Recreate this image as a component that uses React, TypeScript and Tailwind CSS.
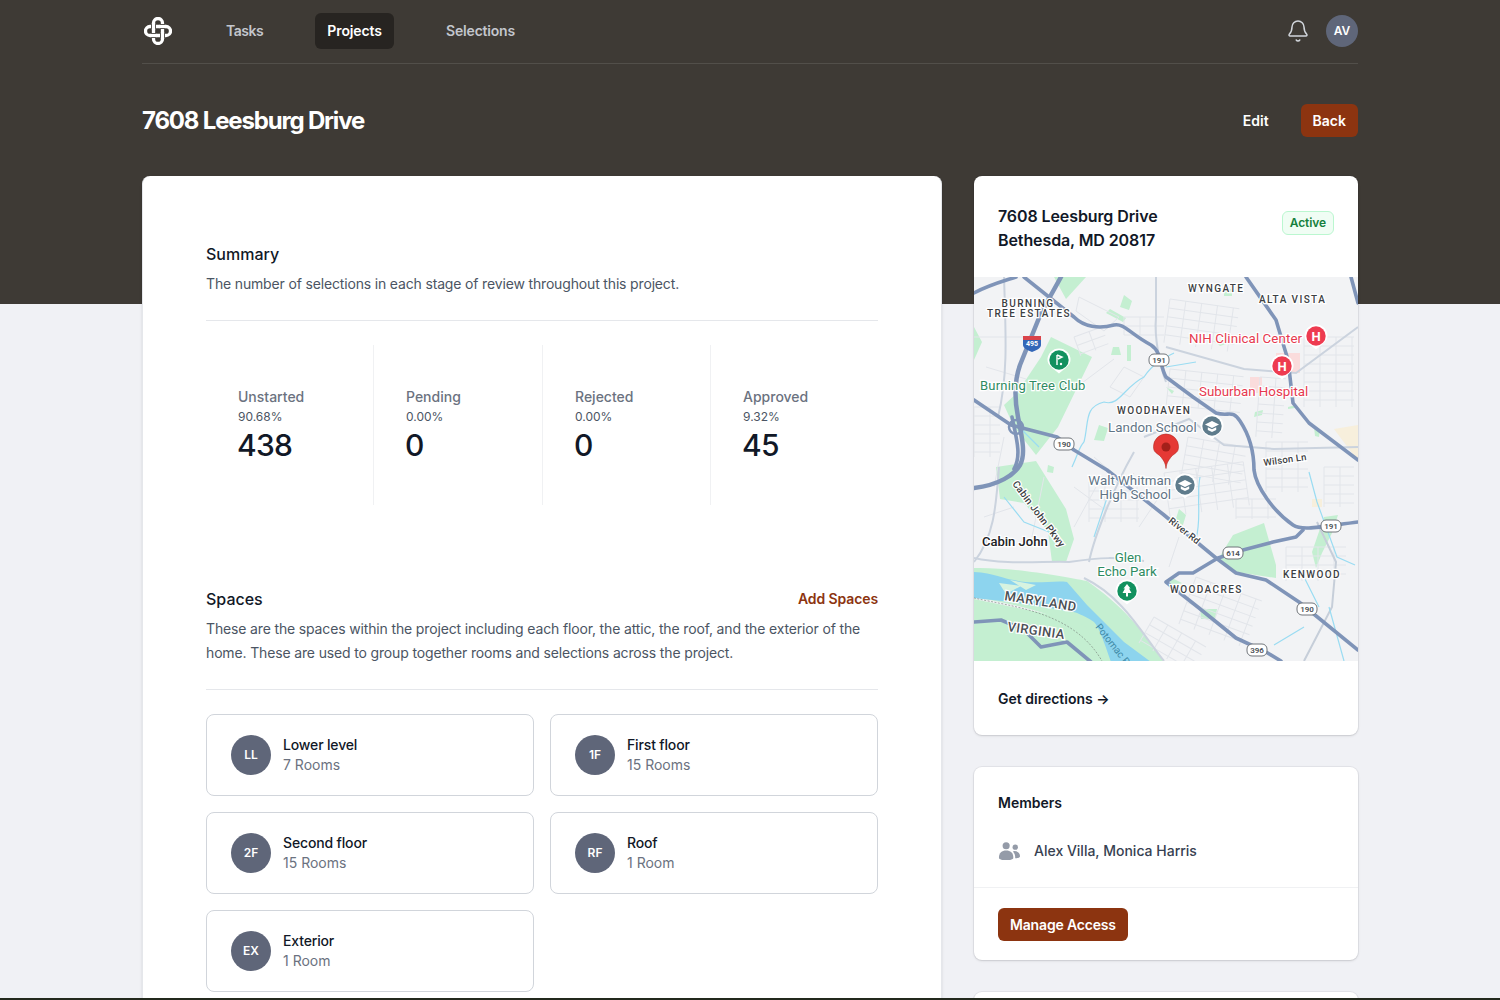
import { Bell } from "lucide-react"
import type { ReactNode } from "react"

const navItems = [
  { label: "Tasks", className: "rounded-md px-3 py-2 text-sm font-semibold tracking-[-0.5px] text-[#c3c6cd]" },
  { label: "Projects", className: "w-[79px] rounded-md bg-[#272421] py-2 text-center text-sm font-semibold tracking-[-0.1px] text-white" },
  { label: "Selections", className: "rounded-md px-3 py-2 text-sm font-semibold tracking-[-0.2px] text-[#c3c6cd]" },
]

const stats = [
  { label: "Unstarted", pct: "90.68%", count: "438" },
  { label: "Pending", pct: "0.00%", count: "0" },
  { label: "Rejected", pct: "0.00%", count: "0" },
  { label: "Approved", pct: "9.32%", count: "45" },
]

const spaces = [
  { initials: "LL", name: "Lower level", rooms: "7 Rooms" },
  { initials: "1F", name: "First floor", rooms: "15 Rooms" },
  { initials: "2F", name: "Second floor", rooms: "15 Rooms" },
  { initials: "RF", name: "Roof", rooms: "1 Room" },
  { initials: "EX", name: "Exterior", rooms: "1 Room" },
]

// residential street meshes on the map: x, y, w, h, angle
const streetBlocks = [
  [196, 22, 70, 44, 8],
  [196, 92, 74, 36, 6],
  [286, 100, 26, 60, 4],
  [330, 60, 50, 70, 0],
  [214, 160, 60, 40, 10],
  [190, 196, 80, 44, -8],
  [292, 165, 42, 50, 0],
  [262, 222, 40, 20, 0],
  [222, 300, 70, 50, 20],
  [312, 270, 60, 34, 0],
  [350, 190, 30, 40, 0],
  [100, 60, 30, 20, -20],
  [115, 205, 50, 40, 0],
  [150, 40, 40, 18, 0],
  [0, 130, 26, 50, 0],
  [180, 340, 60, 30, 30],
]

function Logo() {
  const bg = "#3e3a35"
  return (
    <svg width="28" height="28" viewBox="0 0 28 28" fill="none" stroke="#fff" strokeWidth="3.300">
      <path d="M9.500 10V6a4.500 4.500 0 0 1 9 0v16a4.500 4.500 0 0 1-9 0V10" />
      <path d="M6 9.500h16a4.500 4.500 0 0 1 0 9H6a4.500 4.500 0 0 1 0-9" />
      <path d="M9.500 6.800v5.400" stroke={bg} strokeWidth="5" />
      <path d="M9.500 6v7" />
      <path d="M15.800 9.500h5.400" stroke={bg} strokeWidth="5" />
      <path d="M15 9.500h7" />
      <path d="M18.500 15.800v5.400" stroke={bg} strokeWidth="5" />
      <path d="M18.500 15v7" />
      <path d="M6.800 18.500h5.400" stroke={bg} strokeWidth="5" />
      <path d="M6 18.500h7" />
    </svg>
  )
}

function Shield({ x, y, label }: { x: number; y: number; label: string }) {
  return (
    <g>
      <rect x={x - 10} y={y - 6} width="20" height="12" rx="5" fill="#fff" stroke="#70757a" strokeWidth="1" />
      <text x={x} y={y + 3} textAnchor="middle" fontSize="8" fontWeight="600" fill="#4a4f55">
        {label}
      </text>
    </g>
  )
}

function Pin({ x, y, color, children }: { x: number; y: number; color: string; children: ReactNode }) {
  return (
    <g transform={`translate(${x} ${y})`}>
      <path d="M-11.500 0a11.500 11.500 0 1 1 23 0c0 5-5 8-11.500 13.500c-6.500-5.500-11.500-8.500-11.500-13.500z" fill="#fff" />
      <circle r="9.700" fill={color} />
      {children}
    </g>
  )
}

function SchoolIcon() {
  return (
    <g fill="#fff">
      <path d="M-7-1.500L0-5L7-1.500L0 2Z" />
      <path d="M-4.200 1.200V4L0 6L4.200 4V1.200L0 3.200Z" />
    </g>
  )
}

function MapLabel({ x, y, children, fill = "#3c4043", size = 10, spacing = 1.4, anchor = "start", rotate, weight = 500 }: {
  x: number
  y: number
  children: string
  fill?: string
  size?: number
  spacing?: number
  anchor?: "start" | "middle" | "end"
  rotate?: number
  weight?: number
}) {
  return (
    <text
      x={x}
      y={y}
      fontSize={size}
      fill={fill}
      letterSpacing={spacing}
      textAnchor={anchor}
      fontWeight={weight}
      stroke="#fff"
      strokeWidth="2.500"
      paintOrder="stroke"
      transform={rotate ? `rotate(${rotate} ${x} ${y})` : undefined}
    >
      {children}
    </text>
  )
}

function StreetBlock({ x, y, w, h, angle }: { x: number; y: number; w: number; h: number; angle: number }) {
  const rows = Array.from({ length: Math.floor(h / 9) + 1 }, (_, i) => i * 9)
  const cols = Array.from({ length: Math.floor(w / 16) + 1 }, (_, i) => i * 16)
  return (
    <g transform={`rotate(${angle} ${x} ${y})`}>
      {rows.map((r) => (
        <path key={`r${r}`} d={`M${x} ${y + r}h${w}`} />
      ))}
      {cols.map((c) => (
        <path key={`c${c}`} d={`M${x + c} ${y}v${h}`} />
      ))}
    </g>
  )
}

function LocationMap() {
  return (
    <svg viewBox="0 0 384 384" width="384" height="384" className="block" style={{ fontFamily: "Roboto, sans-serif" }}>
      <rect width="384" height="384" fill="#f2f3f5" />

      {/* parks */}
      <g fill="#c4efd1">
        <path d="M77 60L118 80L84 150L62 178L40 150L30 128L43 116L67 80Z" />
        <path d="M80 0h32l-20 22Z" />
        <path d="M259 258L290 246L302 288L302 301L262 295L245 281Z" />
        <path d="M22 190L62 184L92 232L100 262L92 285L78 285L74 254L50 226L26 222Z" />
        <path d="M0 50l8 15l-8 18Z" />
        <path d="M0 291C40 290 90 300 113 304C150 330 165 350 190 384H120C110 345 80 335 0 320Z" />
        <path d="M0 322C60 335 100 340 112 350L128 384H0Z" />
        <path d="M150 18l8 6l-3 9l-9-3ZM136 32l16 9l-3 4l-17-9ZM139 70h6l2 8h-10ZM153 68h4v16h-4ZM125 148l9 3l-4 13l-10-1ZM74 188l6 2l-1 6l-6-1Z" />
        <path d="M250 12h8v7h-8ZM242 65l14-5l2 5l-12 4ZM281 135l8-2l-1 5l-8 2ZM314 130l8-2l-1 3l-7 1ZM340 150l6 2l-1 8l-4-1ZM192 110l8 4l-2 3ZM205 232l7 6l-4 13l-8-3ZM196 300l12 6l-4 2l-8-1ZM226 332h17l-2 10h-14ZM350 240l14-2l-6 18l-10 20l-6 15l-4-16Z" />
      </g>

      {/* hospital grounds */}
      <path d="M302 76h24v20h-24ZM276 100h12v16h-12Z" fill="#fadcdc" />
      <path d="M360 152l24-4v36ZM338 222h10v8h-10Z" fill="#f8edd6" opacity="0.8" />

      {/* minor streets */}
      <g fill="none" stroke="#e2e5ea" strokeWidth="1">
        {streetBlocks.map(([x, y, w, h, angle]) => (
          <StreetBlock key={`${x}-${y}`} x={x} y={y} w={w} h={h} angle={angle} />
        ))}
        <path d="M0 60h60M12 90l40 12M105 20l40 20l-15 14l-28-20ZM150 90l20 10l-14 20l-20-10ZM100 112l40-30" />
        <path d="M100 210l30 22l30-36M120 180l30 26M100 250l22-40M165 250l20-30M205 260l-10 30" />
        <path d="M10 240l30-10M30 160l-10 50M70 200l-12 60" />
      </g>

      {/* secondary roads */}
      <g fill="none" stroke="#cbd3de" strokeWidth="2">
        <path d="M30 0C32 60 34 100 24 140" />
        <path d="M182 0V40C180 60 186 90 192 105" />
        <path d="M170 160L215 142L250 168L300 172L384 170" />
        <path d="M192 70L270 92L322 96L384 50" />
        <path d="M25 190C22 230 20 260 0 285" />
        <path d="M0 281C30 288 70 284 95 285C130 280 140 280 170 284" />
        <path d="M110 301C150 320 170 360 190 384" />
        <path d="M160 175C140 210 120 260 115 285" />
        <path d="M343 245L362 285L358 330L330 384" stroke="#c6ced9" />
      </g>

      {/* water */}
      <path d="M0 295C20 296 30 302 40 303C60 308 80 303 93 305L113 328L150 365L177 385H137C130 365 125 350 120 345C110 338 100 335 100 335L37 325L0 321Z" fill="#8dd4ee" />
      <path d="M25 306l22 3l-15 8ZM36 303l26 5l-10 5Z" fill="#d7f3e0" />
      <g fill="none" stroke="#9adcf2" strokeWidth="1.200">
        <path d="M110 165C115 145 110 130 130 125C145 130 150 110 170 100C180 85 192 80 200 76" />
        <path d="M98 190C105 175 105 170 110 165M45 150L65 170M30 220L50 245L75 255" />
        <path d="M135 215L120 260M192 90l30-5" />
        <path d="M226 200C222 220 228 240 222 262M330 300L345 330M355 330L370 384M300 368L330 350" />
        <path d="M335 195l8 30l20 55l18 8" />
      </g>
      <path d="M0 321C40 330 100 335 128 384" fill="none" stroke="#7f8d84" strokeWidth="0.700" strokeDasharray="2 1.500" />

      {/* highways */}
      <g fill="none" stroke="#7f94b8" strokeWidth="3.600" strokeLinejoin="round" strokeLinecap="round">
        <path d="M87 0L67 36L46 88C40 105 41 125 44 140C48 160 52 178 46 188C40 198 25 208 0 211" strokeWidth="4.500" />
        <path d="M38 140C42 160 48 178 40 192" />
        <path d="M0 123L37 148L83 160L100 173L133 193L190 238L242 281L262 296L292 303L325 325L384 373" />
        <path d="M50 0L100 40C110 50 125 52 140 48C150 46 155 56 177 68C188 75 186 90 192 100L219 120L242 136C255 140 258 132 266 144C274 156 280 170 280 193C282 210 300 235 319 248C328 254 345 250 384 245" />
        <path d="M329 253L322 260L299 265L269 273L244 281L219 296H205L192 305L225 331L262 361L292 375L307 384" />
        <path d="M272 0L302 43L314 83L319 126L335 146L384 183" />
        <path d="M377 0L384 26" />
        <path d="M0 16C15 8 30 4 42 0" />
        <path d="M0 345L27 343L50 353L67 370L93 365L117 385" />
      </g>

      {/* interchange */}
      <circle cx="42" cy="150" r="7" fill="none" stroke="#7f94b8" strokeWidth="2.500" />

      {/* interstate badge */}
      <g>
        <path d="M49 59h18v4H49Z" fill="#d9434a" />
        <path d="M49 63h18v5c0 3-4 5-9 7c-5-2-9-4-9-7Z" fill="#3367b8" />
        <text x="58" y="69" textAnchor="middle" fontSize="7" fontWeight="700" fill="#fff">495</text>
      </g>

      <Shield x={185} y={83} label="191" />
      <Shield x={90} y={167} label="190" />
      <Shield x={259} y={276} label="614" />
      <Shield x={357} y={249} label="191" />
      <Shield x={333} y={332} label="190" />
      <Shield x={283} y={373} label="396" />

      <MapLabel x={214} y={15}>WYNGATE</MapLabel>
      <MapLabel x={285} y={26}>ALTA VISTA</MapLabel>
      <MapLabel x={54} y={30} anchor="middle">BURNING</MapLabel>
      <MapLabel x={55} y={40} anchor="middle">TREE ESTATES</MapLabel>
      <MapLabel x={143} y={137}>WOODHAVEN</MapLabel>
      <MapLabel x={309} y={301}>KENWOOD</MapLabel>
      <MapLabel x={196} y={316}>WOODACRES</MapLabel>
      <MapLabel x={8} y={269} size={13} spacing={0} fill="#202124">Cabin John</MapLabel>
      <MapLabel x={6} y={113} size={13} spacing={0.200} fill="#2e8b62" weight={400}>Burning Tree Club</MapLabel>
      <MapLabel x={134} y={155} size={13.300} spacing={0.050} fill="#5f7486" weight={400}>Landon School</MapLabel>
      <MapLabel x={197} y={208} size={13.300} spacing={0} fill="#5f7486" anchor="end" weight={400}>Walt Whitman</MapLabel>
      <MapLabel x={197} y={222} size={13.300} spacing={0} fill="#5f7486" anchor="end" weight={400}>High School</MapLabel>
      <MapLabel x={215} y={66} size={13.300} spacing={0.100} fill="#e6394f" weight={400}>NIH Clinical Center</MapLabel>
      <MapLabel x={225} y={119} size={13.300} spacing={0} fill="#e6394f" weight={400}>Suburban Hospital</MapLabel>
      <MapLabel x={154} y={285} size={13.300} spacing={0} fill="#2e8b62" anchor="middle" weight={400}>Glen</MapLabel>
      <MapLabel x={153} y={299} size={13.300} spacing={0} fill="#2e8b62" anchor="middle" weight={400}>Echo Park</MapLabel>
      <MapLabel x={38} y={207} size={10} spacing={0.200} rotate={53}>Cabin John Pkwy</MapLabel>
      <MapLabel x={194} y={245} size={9.500} spacing={0.200} rotate={38}>River Rd</MapLabel>
      <MapLabel x={290} y={189} size={9.500} spacing={0.200} rotate={-8}>Wilson Ln</MapLabel>
      <MapLabel x={30} y={323} size={13} spacing={0.400} fill="#4b4f55" rotate={9}>MARYLAND</MapLabel>
      <MapLabel x={33} y={354} size={13} spacing={0.400} fill="#4b4f55" rotate={8}>VIRGINIA</MapLabel>
      <text x="121" y="350" fontSize="10" fill="#3f8ba8" transform="rotate(52 121 350)">Potomac R</text>

      <Pin x={85} y={83} color="#12915f">
        <path d="M-2-5V5M-2-5L3-3L-1-1" fill="none" stroke="#fff" strokeWidth="1.400" />
        <circle cx="2" cy="4" r="1.200" fill="#fff" />
      </Pin>
      <Pin x={342} y={59} color="#ee3b50">
        <text y="4.500" textAnchor="middle" fontSize="13" fontWeight="700" fill="#fff">H</text>
      </Pin>
      <Pin x={308} y={89} color="#ee3b50">
        <text y="4.500" textAnchor="middle" fontSize="13" fontWeight="700" fill="#fff">H</text>
      </Pin>
      <Pin x={238} y={149} color="#5f7c8c">
        <SchoolIcon />
      </Pin>
      <Pin x={211} y={208} color="#5f7c8c">
        <SchoolIcon />
      </Pin>
      <Pin x={153} y={314} color="#12915f">
        <path d="M0-7L3.500-2.500H2L4.500 2H1V5.500H-1V2H-4.500L-2-2.500H-3.500Z" fill="#fff" />
      </Pin>

      {/* selected location */}
      <path d="M192 191.500C191.500 186 190 184 187 180C183 175.500 179.500 176 179.500 169.500A12.500 12.500 0 0 1 204.500 169.500C204.500 176 201 175.500 197 180C194 184 192.500 186 192 191.500Z" fill="#e53935" stroke="#b3261e" strokeWidth="0.600" />
      <circle cx="192" cy="170" r="4.500" fill="#a3201a" />
    </svg>
  )
}

export default function App() {
  return (
    <div className="flex h-[1000px] flex-col overflow-hidden bg-[#f0f1f5] font-['Inter',sans-serif] text-[#111827]">
      <div className="flex-1 overflow-hidden">
        <header className="h-[304px] bg-[#3e3a35]">
          <div className="mx-auto w-[1216px]">
            <div className="flex h-[64px] items-center justify-between border-b border-[#524f4a] pb-px">
              <div className="flex items-center">
                <div className="ml-[2px] mr-[42px]">
                  <Logo />
                </div>
                <nav className="flex gap-10">
                  {navItems.map((item) => (
                    <a key={item.label} href="#" className={item.className}>
                      {item.label}
                    </a>
                  ))}
                </nav>
              </div>
              <div className="flex items-center gap-4">
                <Bell className="h-6 w-6 text-[#d1d5db]" strokeWidth={1.5} />
                <div className="flex h-8 w-8 items-center justify-center rounded-full bg-[#5f6679] text-xs font-semibold text-white">
                  AV
                </div>
              </div>
            </div>
            <div className="mt-[40px] flex h-[33px] items-center justify-between">
              <h1 className="text-2xl font-bold tracking-[-0.049em] text-white">7608 Leesburg Drive</h1>
              <div className="flex items-center gap-[32px]">
                <a href="#" className="text-sm font-semibold text-white">Edit</a>
                <button className="h-[33px] rounded-md bg-[#8c3410] px-3 text-sm font-semibold text-white">Back</button>
              </div>
            </div>
          </div>
        </header>

        <main className="mx-auto -mt-[128px] flex w-[1216px] items-start gap-[32px]">
          <section className="w-[800px] rounded-t-lg border border-t-0 border-[#e5e7eb] bg-white px-[63px] pb-[64px] pt-[66px] shadow-sm">
            <h2 className="text-base leading-6 font-medium text-[#111827]">Summary</h2>
            <p className="mt-[6px] text-sm leading-6 tracking-[-0.16px] text-[#4b5563]">
              The number of selections in each stage of review throughout this project.
            </p>
            <div className="mt-[24px] grid grid-cols-[168px_169px_168px_167px] border-t border-[#e5e7eb] pt-[24px]">
              {stats.map((s, i) => (
                <div
                  key={s.label}
                  className={
                    i < 3
                      ? "flex h-[160px] flex-col justify-center border-r border-[#f0f1f3] px-8 pt-px"
                      : "flex h-[160px] flex-col justify-center px-8 pt-px"
                  }
                >
                  <div className="text-sm leading-5 font-medium text-[#6b7280]">{s.label}</div>
                  <div className="mt-px text-xs leading-[18px] text-[#4b5563]">{s.pct}</div>
                  <div className="-ml-px -mt-px text-[30px] leading-[40px] font-medium tracking-[-0.75px] text-[#111827]">{s.count}</div>
                </div>
              ))}
            </div>

            <div className="mt-[82px] flex items-center justify-between">
              <h2 className="text-base leading-6 font-medium text-[#111827]">Spaces</h2>
              <a href="#" className="text-sm font-semibold tracking-[-0.1px] text-[#8c3410]">Add Spaces</a>
            </div>
            <p className="mt-[6px] text-sm leading-6 tracking-[-0.15px] text-[#4b5563]">
              These are the spaces within the project including each floor, the attic, the roof, and the exterior of the
              home. These are used to group together rooms and selections across the project.
            </p>
            <div className="mt-[24px] grid grid-cols-2 gap-4 border-t border-[#e5e7eb] pt-[24px]">
              {spaces.map((space) => (
                <div key={space.name} className="flex h-[82px] items-center gap-3 rounded-lg border border-[#d1d5db] px-6">
                  <div className="flex h-10 w-10 items-center justify-center rounded-full bg-[#5f6679] text-xs font-semibold text-white">
                    {space.initials}
                  </div>
                  <div>
                    <div className="text-sm leading-5 font-medium tracking-[-0.15px] text-[#111827]">{space.name}</div>
                    <div className="text-sm leading-5 text-[#6b7280]">{space.rooms}</div>
                  </div>
                </div>
              ))}
            </div>
          </section>

          <aside className="flex w-[384px] flex-col gap-[32px]">
            <div className="overflow-hidden rounded-lg bg-white shadow-sm ring-1 ring-gray-900/5">
              <div className="flex h-[101px] items-start justify-between px-6 pt-[28px]">
                <div className="text-base leading-6 font-semibold tracking-[-0.1px] text-[#111827]">
                  7608 Leesburg Drive
                  <br />
                  Bethesda, MD 20817
                </div>
                <span className="mt-[7px] rounded-md border border-[#bbf7d0] bg-[#f0fdf4] px-[7px] py-[3px] text-xs leading-4 font-semibold tracking-[-0.1px] text-[#15803d]">
                  Active
                </span>
              </div>
              <LocationMap />
              <div className="flex h-[74px] items-center px-6 pt-[2px] text-sm font-semibold text-[#111827]">Get directions →</div>
            </div>

            <div className="rounded-lg bg-white shadow-sm ring-1 ring-gray-900/5">
              <div className="border-b border-[#f0f1f3] px-6 pb-[26px] pt-[26px]">
                <h3 className="text-sm leading-5 font-semibold text-[#111827]">Members</h3>
                <div className="mt-[28px] flex items-center gap-[13px]">
                  <svg viewBox="0 0 24 20" className="h-[20px] w-[23px] fill-[#949ba8]">
                    <circle cx="8.500" cy="4.500" r="3.700" />
                    <circle cx="18" cy="6" r="2.800" />
                    <path d="M1 17c0-5 3-7.500 7.500-7.500S16 12 16 17c0 2-4 2.500-7.500 2.500S1 19 1 17Z" />
                    <path d="M17 10c3.500 0 6 2 6 5.500c0 1.500-2 2-5 2c0-3-.5-5-2.500-7c.5-.3 1-.5 1.500-.5Z" />
                  </svg>
                  <span className="text-sm font-medium text-[#374151]">Alex Villa, Monica Harris</span>
                </div>
              </div>
              <div className="px-6 pb-[19px] pt-[20px]">
                <button className="h-[33px] rounded-md bg-[#8c3410] px-3 text-sm font-semibold tracking-[-0.17px] text-white">Manage Access</button>
              </div>
            </div>

            <div className="h-[40px] rounded-lg bg-white shadow-sm ring-1 ring-gray-900/5" />
          </aside>
        </main>
      </div>
      <div className="h-[2px] bg-[#23291d]" />
    </div>
  )
}
